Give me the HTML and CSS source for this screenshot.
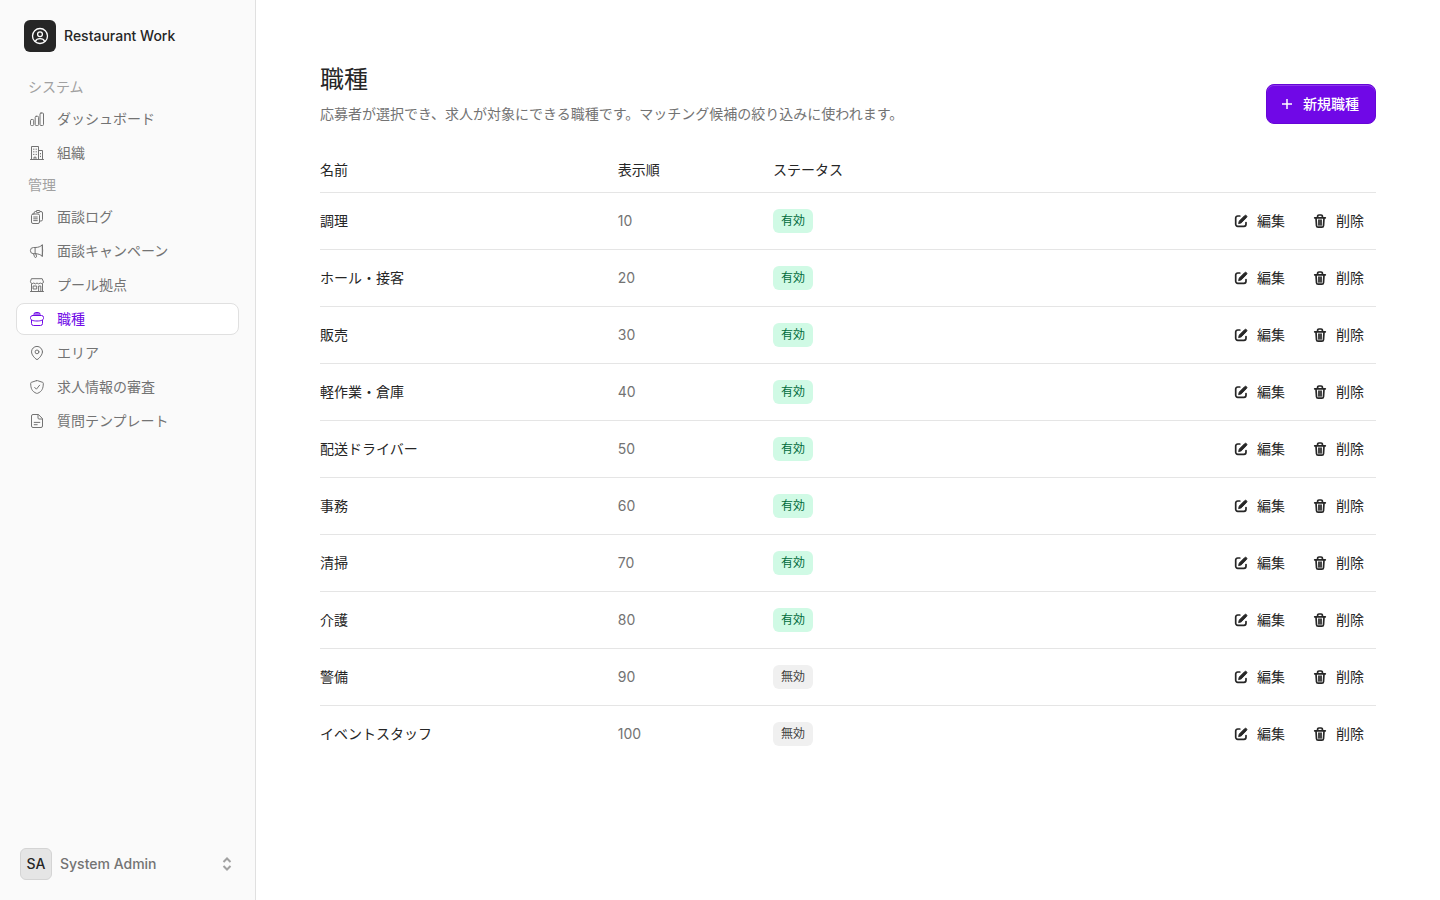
FILE: index.html
```html
<!DOCTYPE html>
<html lang="ja">
<head>
  <meta charset="UTF-8"/>
  <meta name="viewport" content="width=device-width, initial-scale=1.0"/>
  <title>職種 - Restaurant Work</title>
  <link rel="stylesheet" href="styles.css">
</head>
<body>

  <!-- Icons used more than once -->
  <svg class="sprite" aria-hidden="true">
    <symbol id="icon-edit" viewBox="0 0 16 16">
      <path d="M6.8 3H4.700A2 2 0 0 0 2.700 5v6.300a2 2 0 0 0 2 2H11a2 2 0 0 0 2-2V9.500" fill="none" stroke="currentColor" stroke-width="1.7" stroke-linecap="round"/>
      <path d="M5.600 10.600l.7-2.600 5.300-5.300a1.300 1.300 0 0 1 1.900 1.900L8.200 9.900z" fill="currentColor" stroke="currentColor" stroke-width=".9" stroke-linejoin="round"/>
    </symbol>
    <symbol id="icon-trash" viewBox="0 0 16 16">
      <path d="M2.700 4.800h10.600M5.600 4.500V3.300A1.300 1.300 0 0 1 6.900 2h2.200a1.300 1.300 0 0 1 1.300 1.300v1.200M4 5l.5 7.700A1.600 1.600 0 0 0 6.100 14.200h3.800a1.600 1.600 0 0 0 1.600-1.500L12 5M7 7v5M9 7v5" fill="none" stroke="currentColor" stroke-width="1.700" stroke-linecap="round" stroke-linejoin="round"/>
    </symbol>
  </svg>

  <div class="layout">
    <aside class="sidebar">
      <div class="brand">
        <span class="brand-logo">
          <svg viewBox="0 0 18 18" class="icon-brand">
            <circle cx="9" cy="9" r="7.500"/>
            <circle cx="9" cy="7.200" r="2.400"/>
            <path d="M4.300 14.500c.8-1.900 2.600-2.800 4.700-2.800s3.900.9 4.700 2.800"/>
          </svg>
        </span>
        <span class="brand-name">Restaurant Work</span>
      </div>

      <nav class="nav">
        <h2 class="nav-label">システム</h2>
        <a class="nav-item" href="#">
          <svg viewBox="0 0 16 16" class="icon">
            <rect x="1.500" y="8.500" width="3.200" height="6" rx="1"/>
            <rect x="6.200" y="5.300" width="3.400" height="9.200" rx="1"/>
            <rect x="11" y="2" width="3.500" height="12.500" rx="1"/>
          </svg>
          ダッシュボード
        </a>
        <a class="nav-item" href="#">
          <svg viewBox="0 0 16 16" class="icon">
            <path d="M1.500 14.500h13M2.500 14.500v-13h7v13M9.500 5.500h4v9M5 14.500v-2.300h2v2.300"/>
            <path d="M4.500 4.200h.5M7 4.200h.5M4.500 6.800h.5M7 6.800h.5M4.500 9.400h.5M7 9.400h.5M11.500 8.400v.5M11.500 11.200v.5"/>
          </svg>
          組織
        </a>

        <h2 class="nav-label">管理</h2>
        <a class="nav-item" href="#">
          <svg viewBox="0 0 16 16" class="icon">
            <rect x="2.500" y="5" width="8" height="9.500" rx="1.500"/>
            <path d="M5 4.800V4a1.500 1.500 0 0 1 1.500-1.500h.7M11.200 2.500h.8A1.500 1.500 0 0 1 13.500 4v6.500A1.500 1.500 0 0 1 12 12h-1.300"/>
            <rect x="7.200" y="1.500" width="4" height="2" rx="1"/>
            <path d="M4.700 8h3.600M4.700 9.800h3.600M4.700 11.600h3.600"/>
          </svg>
          面談ログ
        </a>
        <a class="nav-item" href="#">
          <svg viewBox="0 0 16 16" class="icon">
            <path d="M6.500 4.500H4.500a3 3 0 0 0 0 6.200h2M6.500 4.500c2.800 0 5-.9 6.800-2.600v11.400c-1.800-1.700-4-2.600-6.800-2.600zM13.300 1.900a9 20 0 0 1 0 11.400M4.500 10.700l1 3a1 1 0 0 0 2-.5L6.800 10.700"/>
          </svg>
          面談キャンペーン
        </a>
        <a class="nav-item" href="#">
          <svg viewBox="0 0 16 16" class="icon">
            <path d="M2.800 1.700h10.400l1.300 3.300a1.900 1.900 0 0 1-3.250 1 2.200 2.200 0 0 1-3.250 0 2.200 2.200 0 0 1-3.250 0A1.900 1.900 0 0 1 1.500 5z"/>
            <path d="M2.500 7.200v7.300M13.500 7.200v7.300M1.500 14.500h13"/>
            <rect x="4.500" y="9" width="3.200" height="3"/>
            <path d="M9.600 14.300V9h2.200v5.300"/>
          </svg>
          プール拠点
        </a>
        <a class="nav-item active" href="#" aria-current="page">
          <svg viewBox="0 0 16 16" class="icon">
            <path d="M5 4V3.200A1.700 1.700 0 0 1 6.700 1.500h2.600A1.700 1.700 0 0 1 11 3.200V4"/>
            <path d="M3.500 4.500h9a2 2 0 0 1 2 2v1c0 1.500-2.500 2.500-6.500 2.500S1.500 9 1.500 7.500v-1a2 2 0 0 1 2-2z"/>
            <path d="M2.500 9.200v3.300a2 2 0 0 0 2 2h7a2 2 0 0 0 2-2V9.200"/>
            <path class="fill" d="M5.500 4V3a1.200 1.200 0 0 1 1.200-1.200h2.600A1.200 1.200 0 0 1 10.500 3v1z"/>
          </svg>
          職種
        </a>
        <a class="nav-item" href="#">
          <svg viewBox="0 0 16 16" class="icon">
            <path d="M13.500 6.900c0 2.900-3 5.900-4.500 7.200a1.500 1.500 0 0 1-2 0C5.500 12.800 2.500 9.800 2.500 6.900a5.500 5.500 0 0 1 11 0z"/>
            <circle cx="8" cy="6.900" r="1.900"/>
          </svg>
          エリア
        </a>
        <a class="nav-item" href="#">
          <svg viewBox="0 0 16 16" class="icon">
            <path d="M7.600 1.600L2.500 3.300a1 1 0 0 0-.8 1c0 5.200 1.300 8.200 5.700 10a1.500 1.500 0 0 0 1.200 0c4.400-1.800 5.700-4.800 5.700-10a1 1 0 0 0-.8-1L8.400 1.600a1.300 1.300 0 0 0-.8 0z"/>
            <path d="M5.700 8.400l1.700 1.800 3.200-4"/>
          </svg>
          求人情報の審査
        </a>
        <a class="nav-item" href="#">
          <svg viewBox="0 0 16 16" class="icon">
            <path d="M9 1.500H4A1.500 1.500 0 0 0 2.500 3v10A1.500 1.500 0 0 0 4 14.500h8a1.500 1.500 0 0 0 1.500-1.500V6zM9 1.700V5a1 1 0 0 0 1 1h3.300M5.200 9.400h5.600M5.200 11.700h3"/>
          </svg>
          質問テンプレート
        </a>
      </nav>

      <button class="user" type="button">
        <span class="avatar">SA</span>
        <span class="user-name">System Admin</span>
        <svg viewBox="0 0 16 16" class="icon-sort">
          <path d="M4.500 6L8 2.500 11.500 6M4.500 10L8 13.500l3.500-3.500"/>
        </svg>
      </button>
    </aside>

    <main class="content">
      <header class="page-header">
        <div>
          <h1>職種</h1>
          <p>応募者が選択でき、求人が対象にできる職種です。マッチング候補の絞り込みに使われます。</p>
        </div>
        <button class="btn-primary" type="button">
          <svg viewBox="0 0 16 16" class="icon-plus"><path d="M8 3v10M3 8h10"/></svg>
          新規職種
        </button>
      </header>

      <table class="table">
        <thead>
          <tr>
            <th class="col-name" scope="col">名前</th>
            <th class="col-order" scope="col">表示順</th>
            <th class="col-status" scope="col">ステータス</th>
            <td></td>
          </tr>
        </thead>
        <tbody>
          <tr>
            <td>調理</td>
            <td class="order">10</td>
            <td><span class="badge badge-on">有効</span></td>
            <td><div class="actions">
              <button type="button"><svg><use href="#icon-edit"/></svg>編集</button>
              <button type="button"><svg><use href="#icon-trash"/></svg>削除</button>
            </div></td>
          </tr>
          <tr>
            <td>ホール・接客</td>
            <td class="order">20</td>
            <td><span class="badge badge-on">有効</span></td>
            <td><div class="actions">
              <button type="button"><svg><use href="#icon-edit"/></svg>編集</button>
              <button type="button"><svg><use href="#icon-trash"/></svg>削除</button>
            </div></td>
          </tr>
          <tr>
            <td>販売</td>
            <td class="order">30</td>
            <td><span class="badge badge-on">有効</span></td>
            <td><div class="actions">
              <button type="button"><svg><use href="#icon-edit"/></svg>編集</button>
              <button type="button"><svg><use href="#icon-trash"/></svg>削除</button>
            </div></td>
          </tr>
          <tr>
            <td>軽作業・倉庫</td>
            <td class="order">40</td>
            <td><span class="badge badge-on">有効</span></td>
            <td><div class="actions">
              <button type="button"><svg><use href="#icon-edit"/></svg>編集</button>
              <button type="button"><svg><use href="#icon-trash"/></svg>削除</button>
            </div></td>
          </tr>
          <tr>
            <td>配送ドライバー</td>
            <td class="order">50</td>
            <td><span class="badge badge-on">有効</span></td>
            <td><div class="actions">
              <button type="button"><svg><use href="#icon-edit"/></svg>編集</button>
              <button type="button"><svg><use href="#icon-trash"/></svg>削除</button>
            </div></td>
          </tr>
          <tr>
            <td>事務</td>
            <td class="order">60</td>
            <td><span class="badge badge-on">有効</span></td>
            <td><div class="actions">
              <button type="button"><svg><use href="#icon-edit"/></svg>編集</button>
              <button type="button"><svg><use href="#icon-trash"/></svg>削除</button>
            </div></td>
          </tr>
          <tr>
            <td>清掃</td>
            <td class="order">70</td>
            <td><span class="badge badge-on">有効</span></td>
            <td><div class="actions">
              <button type="button"><svg><use href="#icon-edit"/></svg>編集</button>
              <button type="button"><svg><use href="#icon-trash"/></svg>削除</button>
            </div></td>
          </tr>
          <tr>
            <td>介護</td>
            <td class="order">80</td>
            <td><span class="badge badge-on">有効</span></td>
            <td><div class="actions">
              <button type="button"><svg><use href="#icon-edit"/></svg>編集</button>
              <button type="button"><svg><use href="#icon-trash"/></svg>削除</button>
            </div></td>
          </tr>
          <tr>
            <td>警備</td>
            <td class="order">90</td>
            <td><span class="badge badge-off">無効</span></td>
            <td><div class="actions">
              <button type="button"><svg><use href="#icon-edit"/></svg>編集</button>
              <button type="button"><svg><use href="#icon-trash"/></svg>削除</button>
            </div></td>
          </tr>
          <tr>
            <td>イベントスタッフ</td>
            <td class="order">100</td>
            <td><span class="badge badge-off">無効</span></td>
            <td><div class="actions">
              <button type="button"><svg><use href="#icon-edit"/></svg>編集</button>
              <button type="button"><svg><use href="#icon-trash"/></svg>削除</button>
            </div></td>
          </tr>
        </tbody>
      </table>
    </main>
  </div>

</body>
</html>
```
FILE: styles.css
```css
* {
  box-sizing: border-box;
}
body {
  margin: 0;
  font-family: Inter, "Noto Sans CJK JP", sans-serif;
  font-size: 14px;
  line-height: 20px;
  color: #262626;
  background-color: #fff;
}
button {
  font: inherit;
  color: inherit;
  border: 0;
  background: none;
  cursor: pointer;
}
.sprite {
  display: none;
}
.layout {
  display: flex;
  min-height: 100vh;
}

/* Sidebar */
.sidebar {
  width: 256px;
  flex-shrink: 0;
  display: flex;
  flex-direction: column;
  padding: 20px 16px;
  background-color: #fafafa;
  border-right: 1px solid #e0e0e0;
}
.brand {
  display: flex;
  align-items: center;
  gap: 8px;
  padding: 0 8px;
  margin-bottom: 19px;
}
.brand-logo {
  width: 32px;
  height: 32px;
  display: flex;
  align-items: center;
  justify-content: center;
  border-radius: 6px;
  background-color: #262626;
}
.brand-name {
  font-weight: 500;
}
.icon-brand {
  width: 18px;
  height: 18px;
  fill: none;
  stroke: #fff;
  stroke-width: 1.3;
}
.nav {
  flex: 1;
}
.nav-label {
  margin: 0;
  padding: 0 12px;
  font-size: 14px;
  font-weight: 400;
  line-height: 32px;
  color: #a1a1a1;
}
.nav-item {
  display: flex;
  align-items: center;
  gap: 12px;
  height: 32px;
  padding: 0 12px;
  border: 1px solid transparent;
  border-radius: 8px;
  color: #737373;
  text-decoration: none;
}
.nav-item + .nav-item {
  margin-top: 2px;
}
.nav-item.active {
  color: #7008e7;
  background-color: #fff;
  border-color: #e0e0e0;
}
.icon {
  width: 16px;
  height: 16px;
  fill: none;
  stroke: currentColor;
  stroke-linecap: round;
  stroke-linejoin: round;
}
.icon .fill {
  fill: currentColor;
  fill-opacity: 0.6;
  stroke: none;
}
.user {
  display: flex;
  align-items: center;
  gap: 8px;
  padding: 0 4px;
  text-align: left;
}
.avatar {
  width: 32px;
  height: 32px;
  display: flex;
  align-items: center;
  justify-content: center;
  border: 1px solid #d4d4d4;
  border-radius: 6px;
  background-color: #e5e5e5;
  font-weight: 500;
}
.user-name {
  flex: 1;
  font-weight: 500;
  color: #737373;
}
.icon-sort {
  width: 16px;
  height: 16px;
  fill: none;
  stroke: #a1a1a1;
  stroke-width: 2;
}

/* Page */
.content {
  flex: 1;
  padding: 64px;
}
.page-header {
  display: flex;
  align-items: flex-end;
  justify-content: space-between;
  gap: 24px;
  margin-bottom: 24px;
}
.page-header h1 {
  margin: 0 0 8px;
  font-size: 24px;
  font-weight: 400;
  line-height: 32px;
}
.page-header p {
  margin: 0;
  color: #737373;
}
.btn-primary {
  display: flex;
  align-items: center;
  gap: 8px;
  height: 40px;
  padding: 0 16px 0 12px;
  border: 1px solid #6606d6;
  border-radius: 8px;
  background-color: #7008e7;
  box-shadow: inset 0 1px 0 rgba(255, 255, 255, 0.2);
  color: #fff;
  font-weight: 500;
}
.icon-plus {
  width: 16px;
  height: 16px;
  stroke: currentColor;
  stroke-width: 1.5;
}

/* Table */
.table {
  width: 100%;
  table-layout: fixed;
  border-collapse: separate;
  border-spacing: 0;
}
.table th,
.table td {
  padding: 0;
  text-align: left;
  font-weight: 400;
  border-bottom: 1px solid #e5e5e5;
}
.table th {
  padding: 12px 0;
}
.table tbody td {
  height: 57px;
}
.table tbody tr:last-child td {
  height: 56px;
  border-bottom: 0;
}
.col-name {
  width: 28.2%;
}
.col-order {
  width: 14.7%;
}
.col-status {
  width: 22%;
}
.table .order {
  color: #737373;
}
.badge {
  display: inline-block;
  padding: 2px 8px;
  border-radius: 6px;
  font-size: 12px;
}
.badge-on {
  background-color: #d0fae5;
  color: #006b3c;
}
.badge-off {
  background-color: #f0f0f0;
  color: #404040;
}
.actions {
  display: flex;
  justify-content: flex-end;
  gap: 3px;
}
.actions button {
  display: flex;
  align-items: center;
  gap: 8px;
  height: 32px;
  padding: 0 12px;
}
.actions svg {
  width: 16px;
  height: 16px;
}
```
